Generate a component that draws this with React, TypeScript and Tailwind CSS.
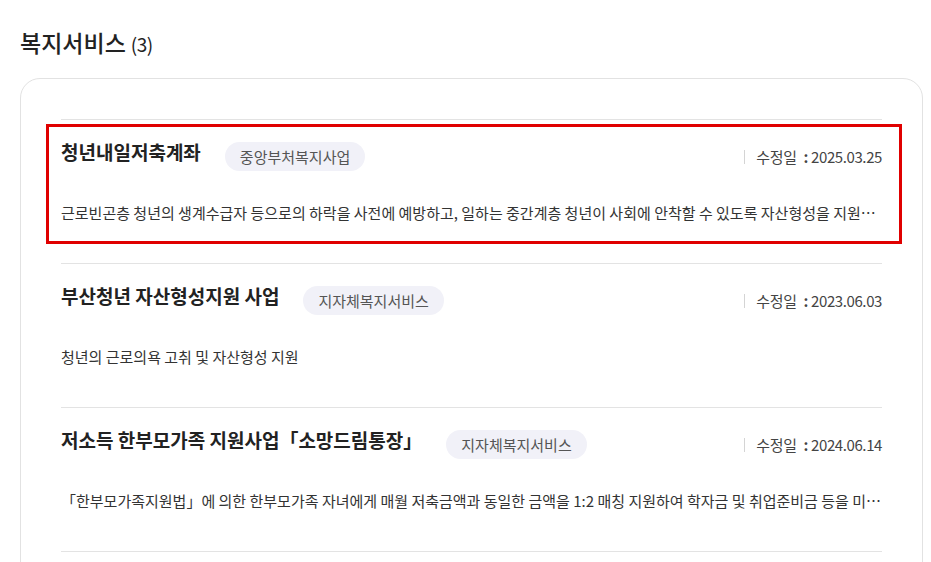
import React from "react";

type Service = {
  title: string;
  tag: string;
  date: string;
  desc: string;
  marked?: boolean;
};

const services: Service[] = [
  {
    title: "청년내일저축계좌",
    tag: "중앙부처복지사업",
    date: "2025.03.25",
    desc: "근로빈곤층 청년의 생계수급자 등으로의 하락을 사전에 예방하고, 일하는 중간계층 청년이 사회에 안착할 수 있도록 자산형성을 지원하여 빈곤층으로의 하락을 방지합니다.",
    marked: true,
  },
  {
    title: "부산청년 자산형성지원 사업",
    tag: "지자체복지서비스",
    date: "2023.06.03",
    desc: "청년의 근로의욕 고취 및 자산형성 지원",
  },
  {
    title: "저소득 한부모가족 지원사업「소망드림통장」",
    tag: "지자체복지서비스",
    date: "2024.06.14",
    desc: "「한부모가족지원법」에 의한 한부모가족 자녀에게 매월 저축금액과 동일한 금액을 1:2 매칭 지원하여 학자금 및 취업준비금 등을 미리 마련할 수 있도록 지원합니다.",
  },
];

function ServiceRow({ s }: { s: Service }) {
  return (
    <li className="relative border-t border-[#e3e3e3] pt-[20px] pb-[40px]">
      {s.marked && (
        <div className="pointer-events-none absolute top-[4px] -left-[15px] -right-[20px] bottom-[19px] border-[3px] border-[#e00000]" />
      )}
      <div className="flex items-start">
        <h3 className="text-[19px] leading-[24px] font-bold text-[#222]">
          {s.title}
        </h3>
        <span className="ml-[24px] mt-[2px] h-[29px] px-[15px] rounded-full bg-[#f1f1f8] text-[15px] leading-[29px] text-[#555]">
          {s.tag}
        </span>
        <div className="ml-auto mt-[8px] flex items-center text-[15px] leading-[18px] text-[#444] tracking-[-0.4px]">
          <span className="mr-[11px] h-[14px] w-px bg-[#d4d4d4]" />
          <span>수정일</span>
          <span className="ml-[7px] mr-[3px] font-bold">:</span>
          <span>{s.date}</span>
        </div>
      </div>
      <p className="mt-[32px] truncate text-[15px] leading-[20px] text-[#333]">
        {s.desc}
      </p>
    </li>
  );
}

export default function App() {
  return (
    <div
      className="min-h-screen bg-white px-[20px] pt-[28px]"
      style={{ fontFamily: '"Noto Sans CJK KR", "Noto Sans", sans-serif' }}
    >
      <h2 className="mb-[20px] flex items-baseline text-[23px] leading-[28px] font-medium text-[#222]">
        복지서비스
        <span className="ml-[5px] text-[19px] font-normal tracking-[-0.5px]">(3)</span>
      </h2>
      <div className="w-[903px] rounded-[20px] border border-[#e2e2e2] px-[40px] pt-[40px]">
        <ul>
          {services.map((s) => (
            <ServiceRow key={s.title} s={s} />
          ))}
          <li className="border-t border-[#e3e3e3] h-[40px]" />
        </ul>
      </div>
    </div>
  );
}
